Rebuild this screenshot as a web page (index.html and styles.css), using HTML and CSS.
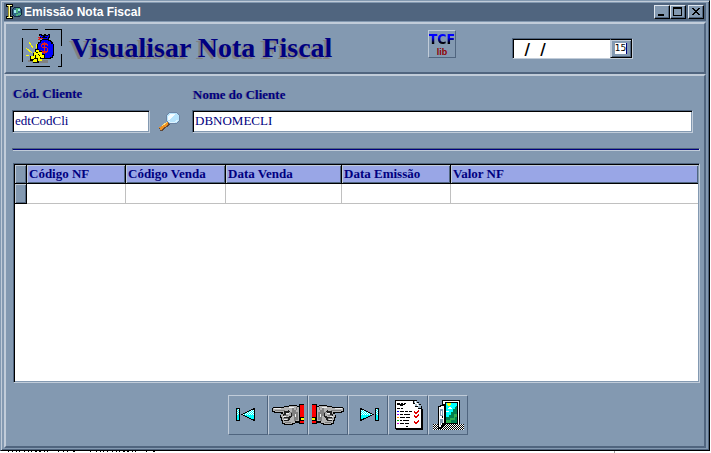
FILE: index.html
```html
<!DOCTYPE html>
<html lang="pt-BR">
<head>
<meta charset="utf-8">
<title>Emissão Nota Fiscal</title>
<link rel="stylesheet" href="styles.css">
</head>
<body>
<main class="window">
  <header class="titlebar">
    <svg class="app-icon" width="16" height="16" viewBox="0 0 16 16" aria-hidden="true">
      <circle cx="11" cy="8" r="5" fill="#306888" stroke="#102840"/>
      <path fill="#50b080" d="M10 4h4v2h-2v3h-2zM12 9h3v2h-3v1h-2v-2h2z"/>
      <path fill="#a0e8f0" d="M8 6h2v3H8zM12 5h2v2h-2z"/>
      <path fill="#000" d="M0 0h7v3H5v9h2v3H0v-3h2V3H0z"/>
      <path fill="#ffffa0" d="M1 1h5v1H1zM3 2h1v11H3zM1 13h5v1H1z"/>
      <path fill="#a09020" d="M2 2h1v11H2z"/>
    </svg>
    <span class="caption">Emissão Nota Fiscal</span>
    <button class="winbtn" aria-label="Minimizar"><svg width="14" height="12" viewBox="0 0 14 12"><path d="M3 8h6v2H3z"/></svg></button>
    <button class="winbtn" aria-label="Maximizar"><svg width="14" height="12" viewBox="0 0 14 12"><path fill-rule="evenodd" d="M2 1h9v9H2zM3 3v6h7V3z"/></svg></button>
    <button class="winbtn close" aria-label="Fechar"><svg width="14" height="12" viewBox="0 0 14 12"><path d="M3 2h2v1h1v1h2V3h1V2h2v1h-1v1H9v1H8v1h1v1h1v1h1v1H9V8H8V7H6v1H5v1H3V8h1V7h1V6h1V5H5V4H4V3H3z"/></svg></button>
  </header>

  <section class="panel banner">
    <svg class="money" width="40" height="38" viewBox="0 0 40 38" aria-hidden="true">
      <path fill="#000" d="M0 0h16v1H0zM23 0h17v17h-1V1H23zM0 9h1v24H0zM39 25h1v13h-4v-1h3zM4 37h24v1H4z"/>
      <path fill="#808080" d="M6 31h20v3H10v-1H6z"/>
      <path fill="#000" d="M17 5h3v1h2V5h2v1h2V5h2v4h-1v2h2v1h1v1h1v2h1v12h-1v2h-2v1H17v-1h-1v-3h-1V15h1v-2h2v-2h2V9h-2V7h-1z"/>
      <path fill="#00f" d="M18 6h1v1h2v1h2V7h3V6h1v2h-1v2h-6V9h-1V8h-1zM20 11h6v1h2v1h1v2h2v11h-1v2h-2v1H18v-2h-1v-4h-1v-8h1v-1h2v-2h1z"/>
      <path fill="#000" d="M20 8h5v1h-5z"/>
      <path fill="#e02020" d="M16 8h2v1h3v1h-3v1h-2v-1h1V9h-1zM22 13h1v1h2v1h1v2h-1v-1h-5v2h5v1h1v4h-1v1h-2v2h-1v-2h-2v-1h-1v-2h1v1h5v-3h-5v-1h-1v-3h1v-1h2z"/>
      <path fill="#e02020" d="M22 15h1v9h-1z"/>
      <path stroke="#ff0" fill="none" d="M7 13l4 6M4 19l6 5M4 26h3M14 15v4"/>
      <path fill="#000" d="M13 20h4v2h3v3h3v5h-3v2h-3v2h-6v-2H8v-5h3v-3h2z"/>
      <path fill="#ff0" d="M14 21h3v2h-3zM12 23h2v1h2v2h-4zM16 23h4v3h-3v-1h-1zM9 27h3v-1h1v3h-1v1H9zM14 26h3v1h1v2h-4zM18 26h4v3h-3v-1h-1zM11 31h1v-1h3v3h-4zM16 29h2v1h2v2h-4z"/>
    </svg>
    <h1>Visualisar Nota Fiscal</h1>
    <button class="tcf" aria-label="TCF lib"><span class="tcf-top">TCF</span><span class="tcf-bottom">lib</span></button>
    <div class="date">
      <input type="text" value="  /  /" aria-label="Data">
      <button aria-label="Calendário"><span>15</span></button>
    </div>
  </section>

  <section class="panel content">
    <div class="fields">
      <div class="field code">
        <label for="cod">Cód. Cliente</label>
        <input id="cod" type="text" value="edtCodCli">
      </div>
      <button class="search" aria-label="Procurar">
        <svg width="24" height="22" viewBox="0 0 24 22">
          <path stroke="#604838" stroke-width="4" d="M2 19l9-7"/>
          <path stroke="#f09020" stroke-width="3" d="M2 18l8-6"/>
          <path stroke="#ffe080" stroke-width="1" d="M4 15l5-4"/>
          <ellipse cx="15" cy="7" rx="7" ry="6" fill="#b8e4fc" stroke="#6c84a4"/>
          <path fill="#f4fcff" d="M10 6l2-3h5l-5 6h-2z"/>
          <path fill="none" stroke="#e0f4ff" d="M10 10q5 4 10-1"/>
        </svg>
      </button>
      <div class="field name">
        <label for="nome">Nome do Cliente</label>
        <input id="nome" type="text" value="DBNOMECLI">
      </div>
    </div>
    <hr>
    <div class="grid">
      <table>
        <colgroup><col class="c-ind"><col class="c-nf"><col class="c-venda"><col class="c-data"><col class="c-emissao"><col></colgroup>
        <thead><tr><td class="ind"></td><th>Código NF</th><th>Código Venda</th><th>Data Venda</th><th>Data Emissão</th><th>Valor NF</th></tr></thead>
        <tbody><tr><td class="ind"></td><td></td><td></td><td></td><td></td><td></td></tr></tbody>
      </table>
    </div>
    <nav class="toolbar">
      <button aria-label="Primeiro"><svg width="40" height="40" viewBox="0 0 40 40">
        <defs><pattern id="dots" width="2" height="2" patternUnits="userSpaceOnUse"><path fill="#0ff" d="M0 0h2v2H0z"/><path fill="#fff" d="M0 0h1v1H0zM1 1h1v1H1z"/></pattern></defs>
        <path fill="#0ff" stroke="#000" d="M8.500 13.500h3v12h-3z"/><path fill="url(#dots)" d="M9 14h2v6H9z"/>
        <path fill="#0ff" d="M26 13v13l-12-6z"/><path fill="url(#dots)" d="M26 13v7H14z"/>
        <path fill="none" stroke="#000" d="M26.500 13v12.500L14 19.500l12.500-6"/>
      </svg></button>
      <button aria-label="Anterior"><svg width="40" height="40" viewBox="0 0 40 40">
        <g id="hand">
          <path fill="#000" d="M5 12h11v-1h5v-1h8v1h2v17h-4v1h-2v1h-9v-1h-2v-3h-1v-3h-1v-3h1v-2H6v-1H4v-4h1z"/>
          <path fill="#b4b4b4" d="M5 13h11v-1h5v-1h8v1h2v14h-4v2h-3v1h-7v-1h-2v-3h-1v-3h-1v-3h2v-2H7v-1H5z"/>
          <path fill="#808080" d="M7 15h10v1H7zM24 13h2v2h2v2h2v8h-2v1h-2v-5h-2v-3h-2v-1h2zM15 20h5v1h-5zM15 23h6v1h-6zM17 27h6v1h-6zM28 12h1v3h-1z"/>
          <path fill="#202020" d="M16 16h4v-1h1v1h1v1h-1v1h-3v2h-2v1h-1v-2h1zM16 22h5v-1h2v-3h1v4h-1v1h-1v2h-1v1h-5v-1h4v-2h-4z"/>
          <path fill="#f0f0f0" d="M6 13h7v1H6zM21 12h5v1h-5zM18 18h3v1h-3zM15 21h3v1h-3zM16 24h3v1h-3zM27 19h1v3h-1z"/>
          <path fill="#000" d="M31 9h5v20h-5z"/><path fill="#f00" d="M32 10h4v18h-4z"/>
          <path fill="#000" d="M32 22h4v4h-4z"/><path fill="#ff0" d="M33 23h3v2h-3z"/>
        </g>
      </svg></button>
      <button aria-label="Próximo"><svg width="40" height="40" viewBox="0 0 40 40"><use href="#hand" transform="matrix(-1 0 0 1 40 0)"/></svg></button>
      <button aria-label="Último"><svg width="40" height="40" viewBox="0 0 40 40">
        <path fill="#0ff" d="M12 13v13l13-6z"/><path fill="url(#dots)" d="M12 13v7h13z"/>
        <path fill="none" stroke="#000" d="M12.500 13v12.500L25 19.500l-12.500-6"/>
        <path fill="#0ff" stroke="#000" d="M27.500 13.500h3v12h-3z"/><path fill="url(#dots)" d="M28 14h2v6h-2z"/>
      </svg></button>
      <button aria-label="Relatório"><svg width="40" height="40" viewBox="0 0 40 40">
        <path fill="#000" d="M7 5h22v2h2v2h2v2h1v3h1v21H8v-1H7z"/>
        <path fill="#fff" d="M8 6h17v3h2v3h3v2h3v19H8z"/>
        <path fill="#a0b8c8" d="M26 6h3v2h2v2h2v3h-3v-2h-3V8h-1z"/><path fill="#fff" d="M27 6h1v2h2v2h1v1h-2V9h-2z"/>
        <path fill="#000" d="M9 8h3v1h1V8h2v1h1V8h2v1h-1v1h-2v1h-3v-1H9zM9 13h3v1H9zM13 13h2v1h-2zM12 16h4v1h-4zM17 16h3v1h-3zM21 16h3v1h-3zM12 19h3v1h-3zM16 19h6v1h-6zM12 22h5v1h-5zM18 22h4v1h-4zM12 25h2v1h-2zM15 25h6v1h-6zM12 28h4v1h-4zM17 28h4v1h-4zM18 31h2v1h-2z"/>
        <path fill="#00f" d="M9 16h2v1H9z"/><path fill="#80f" d="M9 19h2v1H9z"/><path fill="#f80" d="M9 22h2v1H9z"/><path fill="#0a0" d="M9 25h2v1H9z"/><path fill="#c0c" d="M9 28h2v1H9z"/>
        <path fill="none" stroke="#e00000" d="M26 16l2 2 3-3M26 17l2 2 3-3M26 20l2 2 3-3M26 21l2 2 3-3M26 26l2 2 3-3M26 27l2 2 3-3"/>
      </svg></button>
      <button aria-label="Sair"><svg width="40" height="40" viewBox="0 0 40 40">
        <defs><pattern id="floor" width="2" height="2" patternUnits="userSpaceOnUse"><path fill="#fff" d="M0 0h2v2H0z"/><path fill="#000" d="M0 0h1v1H0zM1 1h1v1H1z"/></pattern></defs>
        <path fill="url(#floor)" d="M5 29h31v6H5z"/>
        <path fill="#000" d="M14 5h18v24H14z"/><path fill="#fff" d="M15 6h16v23h-2V8H17v20h-2z"/>
        <path fill="#000" d="M17 7h13v22H17z"/>
        <path fill="#0ff" d="M18 8h11v20H18z"/><path fill="#ff0" d="M19 8h4v2h-1v1h-2v-1h-1z"/>
        <path fill="#fff" d="M20 13h1v-1h2v1h1v1h-4zM18 16h3v1h-3z"/>
        <path fill="#008050" d="M29 11v17H18v-6h3v-2h2v-3h2v-3h2v-2z"/><path fill="#30b050" d="M18 25h4v-2h4v-4h3v3h-2v3h-4v3h-5z"/>
        <path fill="#000" d="M10 11h2v-1h2V9h3v21h-1v1h-1v2h-2v1h-3z"/>
        <path fill="#fff" d="M11 12h2v-1h3v17h-2v2h-1v2h-2z"/>
        <path fill="#8399b1" d="M12 14h3v7h-3zM12 24h3v4h-2v2h-1z"/><path fill="#fff" d="M13 16h1v4h-1z"/><path fill="#000" d="M14 21h1v2h-1z"/>
      </svg></button>
    </nav>
  </section>
</main>
<svg class="behind" width="620" height="2" viewBox="0 0 620 2" aria-hidden="true">
  <path d="M8 0h1v1H8zM12 0h1v1h-1zM16 0h1v1h-1zM19 0h1v1h-1zM24 0h1v1h-1zM28 0h1v1h-1zM31 0h1v1h-1zM35 0h2v1h-2zM39 0h2v1h-2zM44 0h1v1h-1zM47 0h1v1h-1zM58 0h1v1h-1zM63 0h1v1h-1zM67 0h1v1h-1zM73 0h2v1h-2zM90 0h1v1h-1zM96 0h1v1h-1zM100 0h1v1h-1zM103 0h1v1h-1zM107 0h1v1h-1zM112 0h1v1h-1zM116 0h1v1h-1zM119 0h1v1h-1zM123 0h2v1h-2zM127 0h2v1h-2zM132 0h1v1h-1zM135 0h1v1h-1zM146 0h1v1h-1zM153 0h2v1h-2z"/>
  <path fill="#a0a0a0" d="M614 0h1v2h-1z"/>
</svg>
</body>
</html>
```
FILE: styles.css
```css
:root {
  --face: #8399b1;
  --light: #c1ccd9;
  --dark: #50657f;
  --navy: #000080;
}
* { box-sizing: border-box; }
body {
  margin: 0;
  min-height: 100vh;
  display: flex;
  flex-direction: column;
  background: #fff;
  color: var(--navy);
  font-family: "Liberation Serif", serif;
  font-size: 13px;
}
svg { display: block; shape-rendering: crispEdges; }
button { padding: 0; font: inherit; background: var(--face); border: 0; }
input { font: inherit; color: var(--navy); border-radius: 0; outline: 0; }

.window {
  flex: 1;
  display: flex;
  flex-direction: column;
  margin-right: 1px;
  padding: 2px 3px;
  background: var(--face);
  border: 1px solid #000;
  border-top-color: var(--face);
  border-left-color: var(--face);
  box-shadow: inset 1px 1px var(--light), inset -1px -1px var(--dark);
}
.behind { height: 2px; max-width: 100%; }

.titlebar {
  display: flex;
  align-items: center;
  height: 18px;
  margin-bottom: 1px;
  padding: 0 2px;
  background: var(--dark);
}
.app-icon { margin-right: 2px; }
.caption {
  flex: 1;
  color: #fff;
  font: bold 12px/16px "Liberation Sans", sans-serif;
}
.winbtn {
  width: 16px;
  height: 14px;
  border: 1px solid #000;
  border-top-color: #dfe6ee;
  border-left-color: #dfe6ee;
  box-shadow: inset -1px -1px var(--dark);
}
.close { margin-left: 2px; }

.panel {
  border: 2px solid var(--dark);
  border-top-color: var(--light);
  border-left-color: var(--light);
}
.banner {
  display: flex;
  align-items: center;
  height: 52px;
  padding: 0 71px 0 16px;
}
h1 {
  flex: 1;
  margin: 0 0 0 9px;
  font-size: 28px;
  line-height: 30px;
  white-space: nowrap;
  text-shadow: -2px 2px #808080;
}
.tcf {
  display: flex;
  flex-direction: column;
  align-items: center;
  align-self: flex-start;
  width: 28px;
  height: 28px;
  margin: 6px 56px 0 0;
  border: 1px solid var(--dark);
  border-top-color: var(--light);
  border-left-color: var(--light);
  font-weight: bold;
}
.tcf-top {
  font: bold 14px/16px "Liberation Sans Narrow", "DejaVu Sans Condensed", sans-serif;
  background: linear-gradient(#00f 40%, #000 75%);
  background-clip: text;
  color: transparent;
}
.tcf-bottom {
  color: #900000;
  font: bold 9px/10px "Liberation Sans", sans-serif;
}

.date, .field input, .grid {
  background: #fff;
  border: 1px solid var(--light);
  border-top-color: var(--dark);
  border-left-color: var(--dark);
}
.date {
  display: flex;
  width: 121px;
  height: 21px;
}
.date input {
  flex: 1;
  min-width: 0;
  padding: 3px 0 0;
  border: 0;
  border-top: 1px solid #000;
  border-left: 1px solid #000;
  background: #fff;
  color: #000;
  font: bold 15px/16px "DejaVu Sans", sans-serif;
}
.date button {
  display: flex;
  align-items: center;
  justify-content: center;
  width: 22px;
  border: 1px solid #000;
  border-left-color: var(--light);
  box-shadow: inset 1px 1px var(--light), inset -1px -1px var(--dark);
}
.date span {
  background: #fff;
  color: #000;
  border-right: 1px solid var(--navy);
  font: 9px/11px "DejaVu Sans", sans-serif;
}

.content {
  flex: 1;
  display: flex;
  flex-direction: column;
  padding: 10px 4px 11px 6px;
}
.fields { display: flex; align-items: flex-end; padding-right: 7px; }
.field { display: flex; flex-direction: column; }
.code { width: 138px; }
.name { flex: 1; }
.field label {
  height: 24px;
  padding-left: 1px;
  font-weight: bold;
  line-height: 16px;
  text-shadow: -1px 0 #70788c;
}
.name label { line-height: 18px; }
.field input {
  width: 100%;
  height: 23px;
  padding: 0 2px 2px;
  box-shadow: inset 1px 1px #000, inset -1px -1px var(--face);
}
.search { margin: 0 10px 0 8px; }
hr {
  width: 100%;
  height: 3px;
  margin: 15px 0 12px;
  border: 1px solid var(--light);
  border-top-color: var(--dark);
  border-left-color: var(--dark);
  background: var(--navy);
}
.grid {
  flex: 1;
  margin-left: 1px;
  padding: 1px;
  box-shadow: inset 1px 1px #000, inset -1px -1px var(--face);
}
table { width: 100%; table-layout: fixed; border-collapse: separate; border-spacing: 0; }
.c-ind { width: 12px; }
.c-nf { width: 99px; }
.c-venda { width: 100px; }
.c-data { width: 116px; }
.c-emissao { width: 109px; }
th, td { padding: 0 2px; text-align: left; white-space: nowrap; }
th {
  height: 19px;
  background: #99a6e6;
  border-right: 1px solid #000;
  border-bottom: 1px solid #000;
  box-shadow: inset 1px 1px var(--light), inset -1px -1px var(--dark);
  line-height: 16px;
}
th:last-child { border-right: 0; }
td { height: 20px; border-right: 1px solid #c0c0c0; border-bottom: 1px solid #c0c0c0; }
td:last-child { border-right: 0; }
thead td { height: 19px; }
.ind {
  background: var(--face);
  border-color: #000;
  box-shadow: inset 1px 1px var(--light), inset -1px -1px var(--dark);
}
.toolbar { display: flex; justify-content: center; margin: 12px 16px 0 0; }
.toolbar button {
  width: 40px;
  height: 40px;
  border: 1px solid var(--dark);
  border-top-color: var(--light);
  border-left-color: var(--light);
}
.toolbar svg { margin: -1px; }
```
